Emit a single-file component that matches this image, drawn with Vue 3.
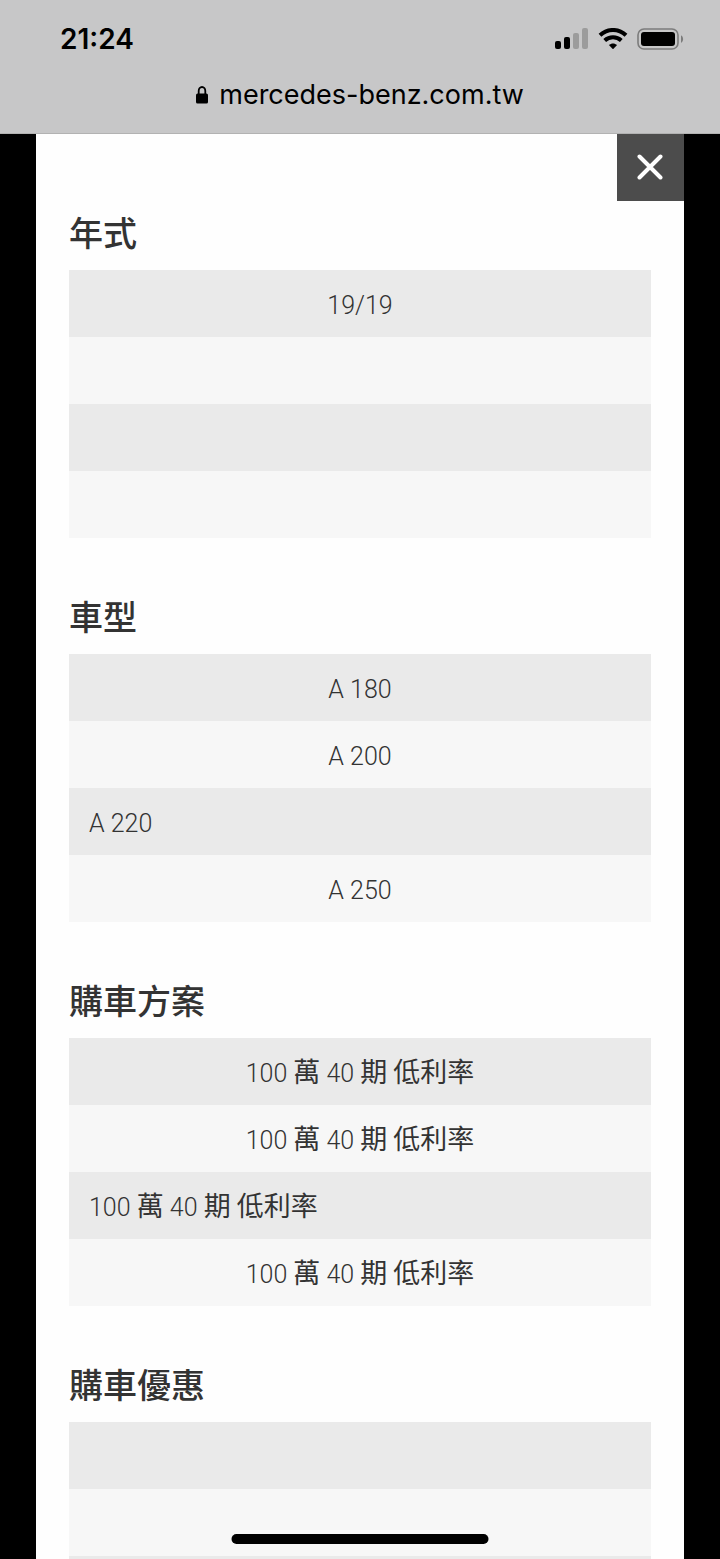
<template>
  <div class="screen">
    <header class="browser">
      <div class="status">
        <time class="clock">21:24</time>
        <div class="indicators">
          <svg class="signal" viewBox="0 0 34 22" aria-hidden="true">
            <rect x="0" y="13" width="6" height="8" rx="2" />
            <rect x="9" y="9" width="6" height="12" rx="2" />
            <rect class="off" x="18" y="5" width="6" height="16" rx="2" />
            <rect class="off" x="27" y="0" width="6" height="21" rx="2" />
          </svg>
          <svg class="wifi" viewBox="0 0 30 22" aria-hidden="true">
            <path d="M2 7.2C9.4 0.2 20.6 0.2 28 7.2" />
            <path d="M6.7 12.4C11.4 8.1 18.6 8.1 23.3 12.4" />
            <path
              class="dot"
              d="M10.9 17C13.3 14.9 16.7 14.9 19.1 17L15.5 20.8C15.2 21.1 14.8 21.1 14.5 20.8Z"
            />
          </svg>
          <svg class="battery" viewBox="0 0 48 22" aria-hidden="true">
            <rect class="shell" x="1" y="1" width="40" height="20" rx="6" />
            <rect x="4" y="4" width="34" height="14" rx="3" />
            <path class="cap" d="M44 7.2C46.8 8.6 46.8 13.4 44 14.8Z" />
          </svg>
        </div>
      </div>
      <div class="address">
        <svg class="lock" viewBox="0 0 12 18" aria-hidden="true">
          <path d="M2.7 8.5V5A3.3 4 0 0 1 9.3 5V8.5" />
          <rect x="0" y="7.6" width="12" height="10" rx="1.6" />
        </svg>
        <span>mercedes-benz.com.tw</span>
      </div>
    </header>

    <main class="panel">
      <div class="toolbar">
        <button class="close" type="button" aria-label="關閉">
          <svg viewBox="0 0 26 26" aria-hidden="true">
            <path d="M2.5 2.5L23.5 23.5M23.5 2.5L2.5 23.5" />
          </svg>
        </button>
      </div>
      <section class="group" v-for="group in groups" :key="group.title">
        <h2 class="title">{{ group.title }}</h2>
        <ul class="list">
          <li
            v-for="(item, index) in group.items"
            :key="index"
            :class="{ item: true, start: index === 2 }"
          >
            <span
              v-for="(part, i) in splitText(item)"
              :key="i"
              :class="{ han: isHan(part) }"
              >{{ part }}</span
            >
          </li>
        </ul>
      </section>
    </main>
    <div class="home-bar"></div>
  </div>
</template>

<script setup>
const plan = "100 萬 40 期 低利率";

const groups = [
  { title: "年式", items: ["19/19", "", "", ""] },
  { title: "車型", items: ["A 180", "A 200", "A 220", "A 250"] },
  { title: "購車方案", items: [plan, plan, plan, plan] },
  { title: "購車優惠", items: ["", "", "", ""] },
];

// Chinese runs are set heavier than the light digits
function isHan(text) {
  return /\p{Script=Han}/u.test(text);
}

function splitText(text) {
  return text.split(/(\p{Script=Han}+)/u).filter((part) => part !== "");
}
</script>

<style>
body {
  margin: 0;
  background-color: #000;
}
</style>

<style scoped>
.screen {
  display: flex;
  flex-direction: column;
  height: 100vh;
  overflow: hidden;
  background-color: #000;
  font-family: Roboto, "Noto Sans CJK TC", sans-serif;
  color: #333;
}

.browser {
  flex: none;
  box-sizing: border-box;
  padding: 20px 35px 20px 60px;
  border-bottom: 1px solid #b2b2b2;
  background-color: #c7c7c8;
  font-family: Inter, "Liberation Sans", sans-serif;
  color: #000;
}

.status {
  display: flex;
  justify-content: space-between;
  align-items: center;
  height: 37px;
}

.clock {
  font-size: 28px;
  font-weight: 600;
}

.indicators {
  display: flex;
  align-items: center;
  gap: 9px;
}

.signal {
  width: 34px;
  height: 22px;
}

.signal .off {
  fill: #9c9c9c;
}

.wifi {
  width: 30px;
  height: 22px;
}

.wifi path {
  fill: none;
  stroke: #000;
  stroke-width: 4;
}

.wifi .dot {
  fill: #000;
  stroke: none;
}

.battery {
  width: 48px;
  height: 22px;
}

.battery .shell {
  fill: none;
  stroke: #7c7c7c;
  stroke-width: 1.6;
}

.battery .cap {
  fill: #7c7c7c;
}

.address {
  display: flex;
  justify-content: center;
  align-items: center;
  gap: 11px;
  margin-right: 25px;
  padding-top: 20px;
  font-size: 27px;
  line-height: 36px;
}

.lock {
  width: 12px;
  height: 18px;
}

.lock path {
  fill: none;
  stroke: #000;
  stroke-width: 1.8;
}

.panel {
  flex: 1;
  min-height: 0;
  margin: 0 5%;
  overflow-y: auto;
  scrollbar-width: none;
  background-color: #fefefe;
}

.toolbar {
  display: flex;
  justify-content: flex-end;
}

.close {
  display: flex;
  justify-content: center;
  align-items: center;
  width: 67px;
  height: 67px;
  padding: 0 2px 2px 0;
  border: none;
  background-color: #4c4c4c;
  cursor: pointer;
}

.close svg {
  width: 26px;
  height: 26px;
}

.close path {
  stroke: #fff;
  stroke-width: 4;
  stroke-linecap: round;
}

.group {
  margin: 0 33px 47px;
}

.title {
  margin: 0;
  padding-bottom: 3px;
  font-size: 34px;
  font-weight: 500;
  line-height: 66px;
}

.list {
  margin: 0;
  padding: 0;
  list-style: none;
}

.item {
  box-sizing: border-box;
  height: 67px;
  padding: 4px 20px 0;
  background-color: #f7f7f7;
  font-size: 25px;
  font-weight: 300;
  line-height: 63px;
  text-align: center;
  white-space: pre-wrap;
}

.item:nth-child(odd) {
  background-color: #eaeaea;
}

.item .han {
  font-size: 27px;
  font-weight: 400;
}

.item.start {
  text-align: left;
}

.home-bar {
  position: fixed;
  bottom: 15px;
  left: 50%;
  width: 257px;
  height: 10px;
  border-radius: 5px;
  background-color: #000;
  transform: translateX(-50%);
}
</style>
